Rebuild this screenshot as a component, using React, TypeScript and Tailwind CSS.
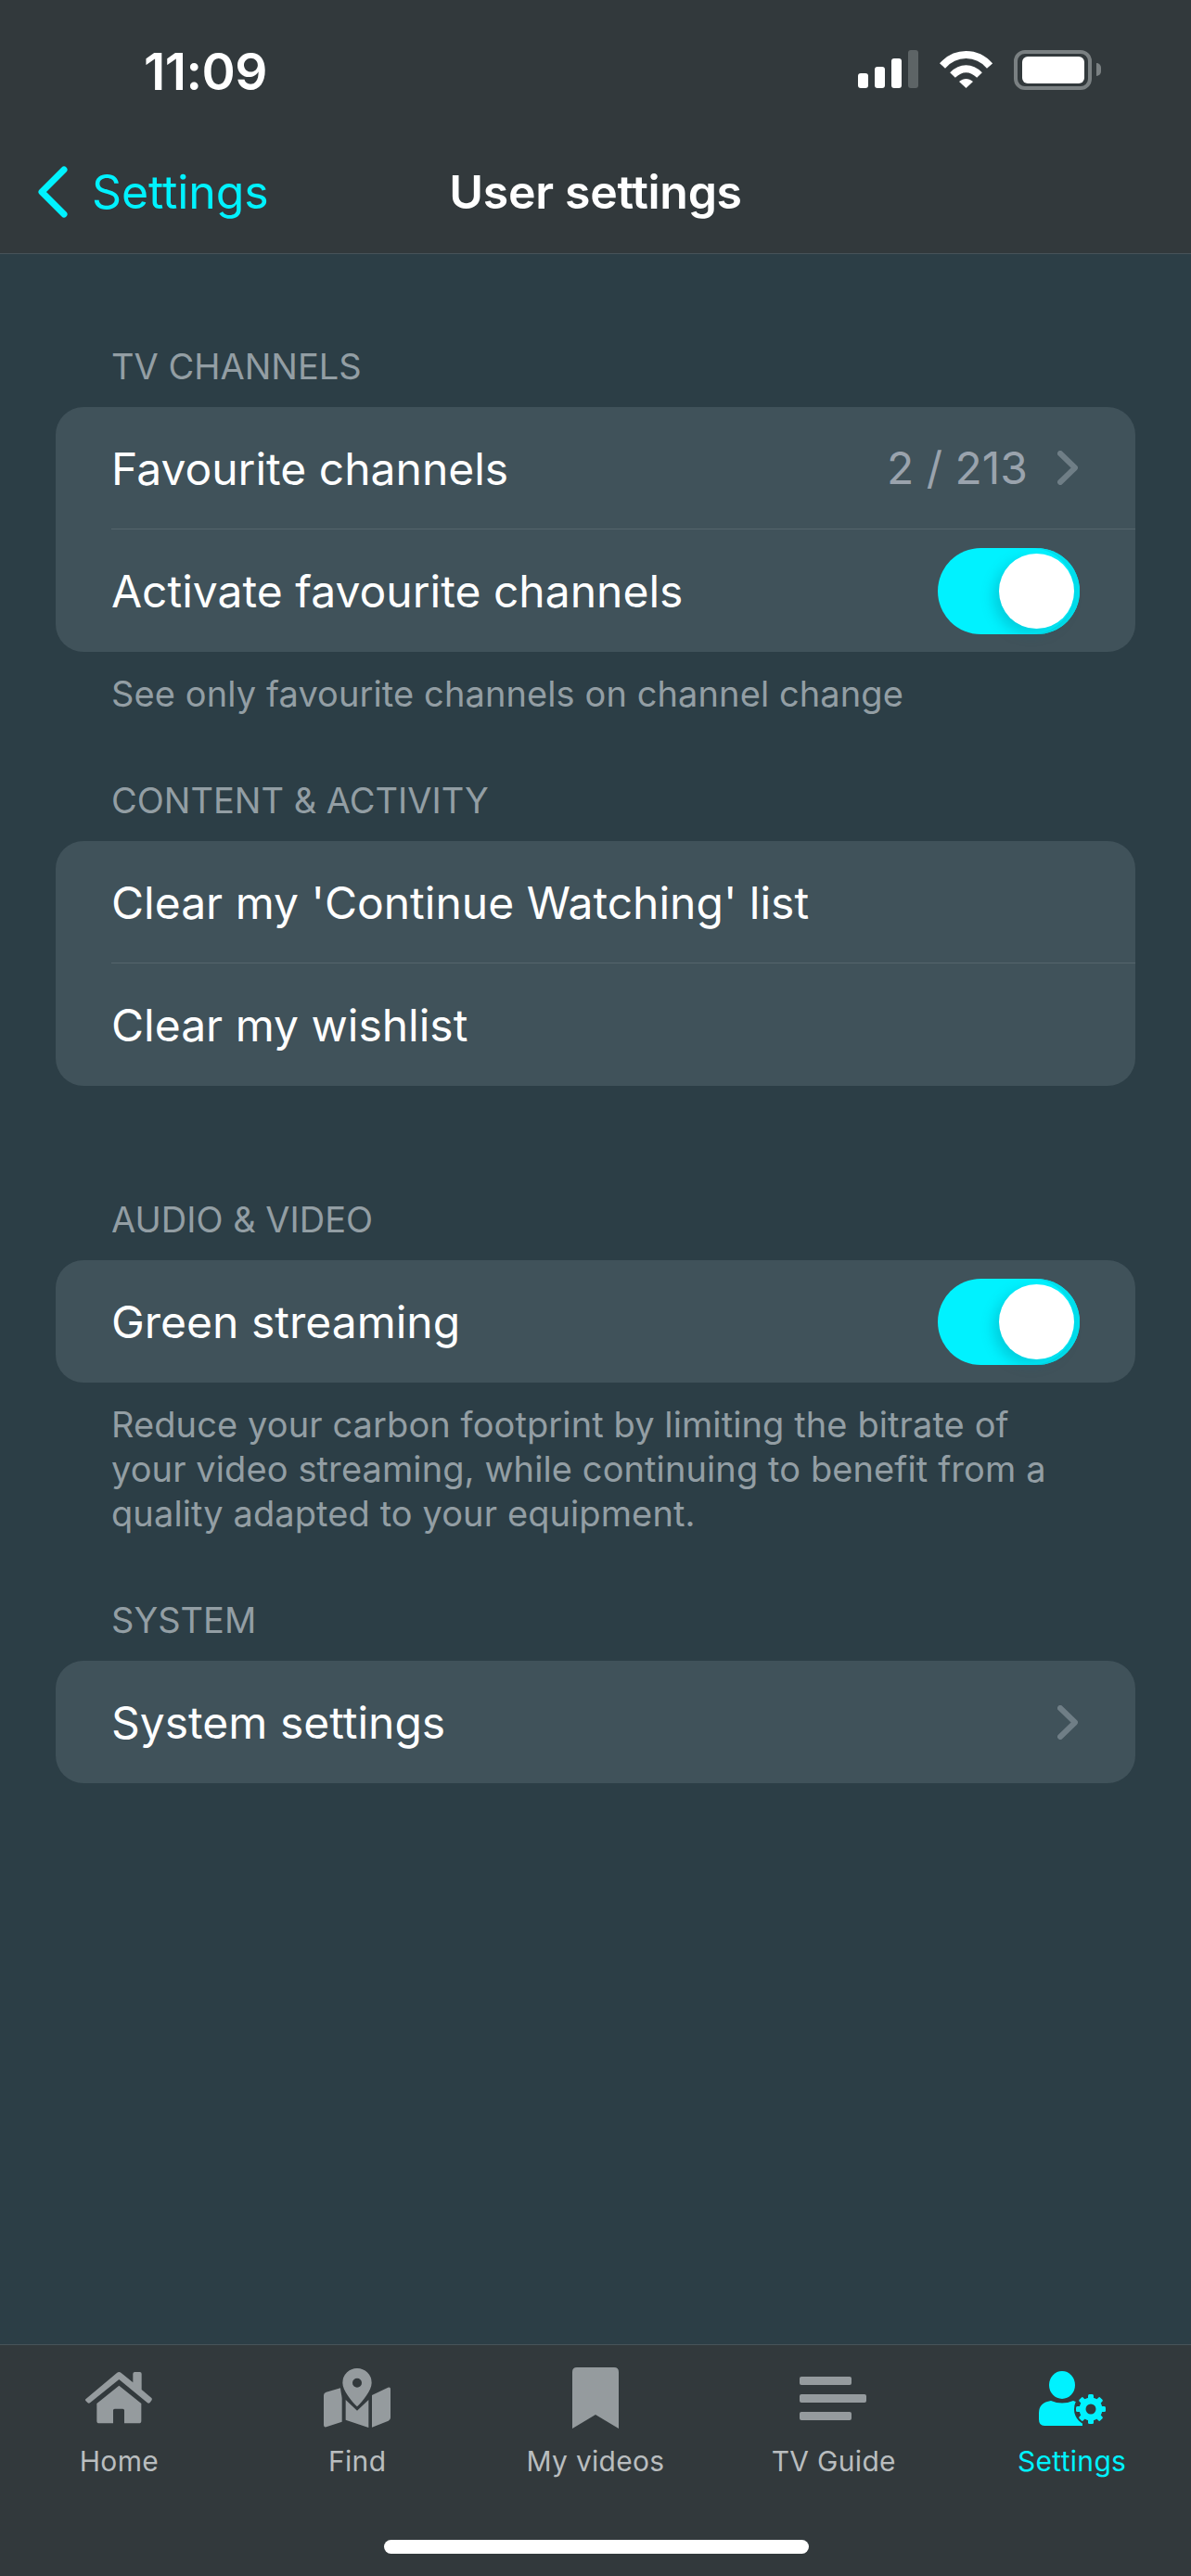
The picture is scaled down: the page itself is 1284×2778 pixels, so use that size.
import React from "react";

function Toggle() {
  return (
    <div className="relative h-[93px] w-[153px] rounded-full bg-[#00f2ff] shadow-[inset_-6px_0_0_#00e0ee]">
      <div className="absolute left-[66px] top-[6px] h-[81px] w-[81px] rounded-full bg-white shadow-[-6px_6px_14px_rgba(0,100,120,0.25)]" />
    </div>
  );
}

function Chevron() {
  return (
    <svg className="mr-[2px]" width="22" height="37" viewBox="0 0 22 37" fill="none">
      <path d="M3 3 L19 18.5 L3 34" stroke="#6f7e86" strokeWidth="6" strokeLinecap="round" strokeLinejoin="round" />
    </svg>
  );
}

function Heading({ children, className }: { children: React.ReactNode; className: string }) {
  return <div className={`h-[36px] pl-[120px] text-[38px] leading-[38px] text-[#939ea4] ${className}`}>{children}</div>;
}

function Row({ label, right, divider }: { label: string; right?: React.ReactNode; divider?: boolean }) {
  return (
    <div className="pl-[60px]">
      <div className={`flex h-[132px] items-center justify-between pr-[60px] text-[48px] text-white ${divider ? "border-b border-[#55656c]" : ""}`}>
        <span className="pt-[2px]">{label}</span>
        {right}
      </div>
    </div>
  );
}

function Card({ children }: { children: React.ReactNode }) {
  return <div className="mx-[60px] mt-[27px] overflow-hidden rounded-[30px] bg-[#40525a]">{children}</div>;
}

function Note({ children }: { children: React.ReactNode }) {
  return <div className="mt-[21px] pl-[120px] pr-[120px] text-[38px] leading-[48px] tracking-[0.1px] text-[#939ea4]">{children}</div>;
}

function HomeIcon() {
  return (
    <svg width="72" height="56" viewBox="96 78 216 168" fill="#959b9e">
      <path d="M97 166 L198 81 Q205 75 212 81 L250 112 V84 Q250 78 256 78 H272 Q278 78 278 84 V135 L310 162 Q313 165 310 170 L305 177 Q301 181 297 178 L205 102 L111 178 Q107 181 103 177 L97 171 Q95 168 97 166Z" />
      <path d="M133 180 L205 122 L277 180 V236 Q277 244 269 244 H222 V202 Q222 197 217 197 H191 Q186 197 186 202 V244 H141 Q133 244 133 236Z" />
    </svg>
  );
}

function FindIcon() {
  return (
    <svg width="72" height="64" viewBox="867 68 216 192" fill="#959b9e">
      <path fillRule="evenodd" d="M975 68 A47 47 0 0 1 1022 115 C1022 140 992 175 975 192 C958 175 928 140 928 115 A47 47 0 0 1 975 68Z M975 100 A15 15 0 1 0 975 130 A15 15 0 1 0 975 100Z" />
      <path d="M867 155 Q867 148 875 145 L921 132 C923 150 926 158 926 165 V241 L875 258 Q867 260 867 252Z" />
      <path d="M938 170 L975 205 L1012 170 V260 L938 235Z" />
      <path d="M1023 155 L1075 130 Q1083 127 1083 135 V228 Q1083 236 1076 238 L1023 259Z" />
    </svg>
  );
}

function BookmarkIcon() {
  return (
    <svg width="50" height="66" viewBox="0 0 50 66" fill="#959b9e">
      <path d="M5 0 H45 Q50 0 50 5 V66 L25 51 L0 66 V5 Q0 0 5 0Z" />
    </svg>
  );
}

function GuideIcon() {
  return (
    <svg className="-ml-[2px]" width="72" height="47" viewBox="0 0 72 47" fill="#959b9e">
      <rect x="0" y="0" width="56" height="9" rx="2" />
      <rect x="0" y="19" width="72" height="9" rx="2" />
      <rect x="0" y="38" width="56" height="9" rx="2" />
    </svg>
  );
}

function SettingsIcon() {
  const angles = [0, 45, 90, 135, 180, 225, 270, 315];
  return (
    <svg width="72" height="59" viewBox="0 0 72 59" fill="#00f2ff">
      <ellipse cx="25" cy="15" rx="14" ry="15" />
      <path d="M0 52 V45 Q0 34 13 32 Q25 37 37 32 Q46 34 47 45 V59 H6 Q0 59 0 52Z" />
      <circle cx="56" cy="41" r="18" fill="#323a3d" />
      <circle cx="56" cy="41" r="12.5" />
      {angles.map((a) => (
        <rect key={a} x="53" y="25" width="6" height="7" rx="1.5" transform={`rotate(${a} 56 41)`} />
      ))}
      <circle cx="56" cy="41" r="5.5" fill="#323a3d" />
    </svg>
  );
}

function Tab({ icon, label, active }: { icon: React.ReactNode; label: string; active?: boolean }) {
  return (
    <div className="flex flex-col items-center">
      <div className="flex h-[70px] items-center justify-center">{icon}</div>
      <div className={`mt-[15px] text-[30px] leading-[36px] tracking-[0.3px] ${active ? "text-[#00f2ff]" : "text-[#b9bdbf]"}`}>{label}</div>
    </div>
  );
}

export default function App() {
  return (
    <div className="flex h-[2778px] w-[1284px] flex-col overflow-hidden bg-[#2c3e46] font-['Inter',sans-serif]">
      <header className="h-[274px] border-b border-[#475359] bg-[#32393c]">
        <div className="flex h-[150px] items-center justify-between pl-[155px] pr-[97px]">
          <span className="pt-[4px] text-[55px] font-semibold tracking-[-0.5px] text-white">11:09</span>
          <div className="flex items-center gap-[23px]">
            <svg width="65" height="42" viewBox="0 0 65 42" fill="white">
              <rect x="0" y="25" width="11" height="16" rx="3" />
              <rect x="18" y="18" width="11" height="23" rx="3" />
              <rect x="36" y="9" width="11" height="32" rx="3" />
              <rect x="54" y="0" width="11" height="41" rx="3" fill="#5d6466" />
            </svg>
            <svg width="57" height="42" viewBox="0 0 57 42" fill="none" stroke="white" strokeWidth="8">
              <path d="M3 17 C17 1 40 1 54 17" />
              <path d="M14 27 C23 18 34 18 43 27" />
              <path d="M21 34 L28.5 41 L36 34 C31 30 26 30 21 34Z" fill="white" strokeWidth="0" />
            </svg>
            <div className="flex items-center gap-[5px]">
              <div className="flex h-[43px] w-[84px] items-center justify-center rounded-[12px] border-[4px] border-[#7a8082]">
                <div className="h-[29px] w-[67px] rounded-[6px] bg-white" />
              </div>
              <div className="h-[14px] w-[5px] rounded-r-full bg-[#7a8082]" />
            </div>
          </div>
        </div>
        <div className="grid h-[123px] grid-cols-[1fr_auto_1fr] items-center pb-[9px]">
          <div className="flex items-center gap-[26px] pl-[40px]">
            <svg width="33" height="56" viewBox="0 0 33 56" fill="none">
              <path d="M29 4 L5 28 L29 52" stroke="#00f2ff" strokeWidth="7" strokeLinecap="round" strokeLinejoin="round" />
            </svg>
            <span className="text-[50px] tracking-[-0.1px] text-[#00f2ff]">Settings</span>
          </div>
          <span className="text-[50px] font-semibold tracking-[-0.3px] text-white">User settings</span>
          <div />
        </div>
      </header>

      <main className="flex-1">
        <Heading className="mt-[102px]">TV CHANNELS</Heading>
        <Card>
          <Row
            label="Favourite channels"
            divider
            right={
              <div className="flex items-center gap-[32px]">
                <span className="text-[48px] text-[#9aa3ad]">2 / 213</span>
                <Chevron />
              </div>
            }
          />
          <Row label="Activate favourite channels" right={<Toggle />} />
        </Card>
        <Note>See only favourite channels on channel change</Note>

        <Heading className="mt-[72px]">CONTENT &amp; ACTIVITY</Heading>
        <Card>
          <Row label="Clear my 'Continue Watching' list" divider />
          <Row label="Clear my wishlist" />
        </Card>

        <Heading className="mt-[125px]">AUDIO &amp; VIDEO</Heading>
        <Card>
          <Row label="Green streaming" right={<Toggle />} />
        </Card>
        <Note>
          Reduce your carbon footprint by limiting the bitrate of your video streaming, while continuing to benefit from a quality adapted to your equipment.
        </Note>

        <Heading className="mt-[72px]">SYSTEM</Heading>
        <Card>
          <Row label="System settings" right={<Chevron />} />
        </Card>
      </main>

      <footer className="relative h-[250px] border-t border-[#475359] bg-[#32393c] pt-[22px]">
        <div className="grid grid-cols-5">
          <Tab icon={<HomeIcon />} label="Home" />
          <Tab icon={<FindIcon />} label="Find" />
          <Tab icon={<BookmarkIcon />} label="My videos" />
          <Tab icon={<GuideIcon />} label="TV Guide" />
          <Tab icon={<SettingsIcon />} label="Settings" active />
        </div>
        <div className="absolute bottom-[24px] left-[414px] h-[15px] w-[458px] rounded-full bg-white" />
      </footer>
    </div>
  );
}
